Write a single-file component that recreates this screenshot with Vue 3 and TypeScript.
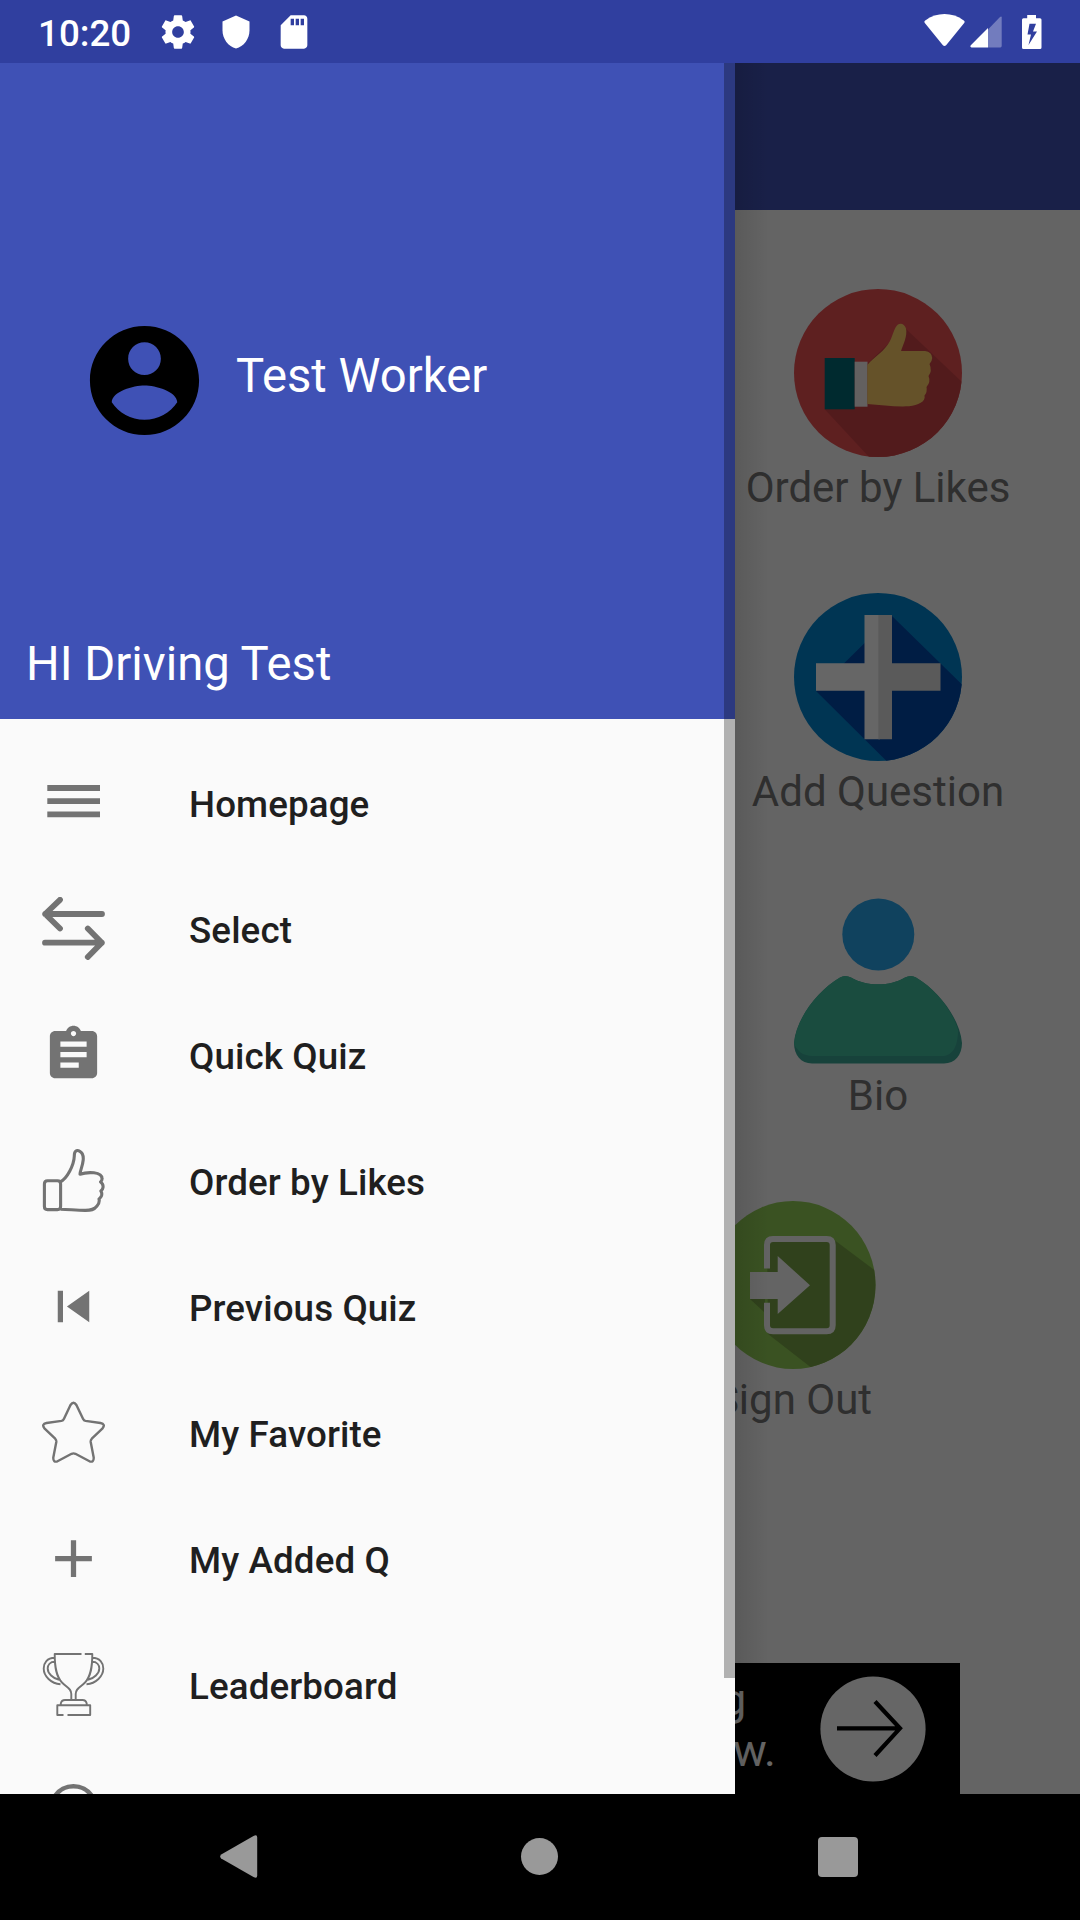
<script setup lang="ts">
interface Stroke {
  d: string
  width?: number
  fill?: boolean
}

interface MenuEntry {
  label: string
  box: number
  shapes: Stroke[]
}

const entries: MenuEntry[] = [
  {
    label: 'Homepage',
    box: 63,
    shapes: [{ d: 'M5.3 17H58M5.3 30.2H58M5.3 43.3H58', width: 5.8 }],
  },
  {
    label: 'Select',
    box: 63,
    shapes: [
      { d: 'M60 17H3.2M18 2.8L3.2 17L18 31.5M3 45.7H59.8M45.8 31.5L59.8 45.7L45.8 60', width: 5.8 },
    ],
  },
  {
    label: 'Quick Quiz',
    box: 24,
    shapes: [
      {
        d: 'M19 3h-4.18C14.4 1.84 13.3 1 12 1c-1.3 0-2.4.84-2.82 2H5c-1.1 0-2 .9-2 2v14c0 1.1.9 2 2 2h14c1.1 0 2-.9 2-2V5c0-1.1-.9-2-2-2zm-7 0c.55 0 1 .45 1 1s-.45 1-1 1-1-.45-1-1 .45-1 1-1zm2 14H7v-2h7v2zm3-4H7v-2h10v2zm0-4H7V7h10v2z',
        fill: true,
      },
    ],
  },
  {
    label: 'Order by Likes',
    box: 63,
    shapes: [
      {
        d: 'M5.5 31.8H15.5Q18.6 31.8 18.6 35V57.5Q18.6 60.6 15.5 60.6H5.5Q2.4 60.6 2.4 57.5V35Q2.4 31.8 5.5 31.8ZM18 33C25 30 32 16 32.3 7C32.2 1.5 35 .8 37.5 2.2C41 4 41.5 7.5 41.2 11C40.5 18 38.2 21 38 25.2C43 23.5 47 23.3 52 23.8C57 24.4 60 26.5 60 29.5Q60.2 31.5 58.6 33Q61.5 35 61 38.5Q60.8 40.5 58.9 42Q60.3 44 59.5 46.8Q58.8 48.8 57 50Q58 53.5 55 57C52 60.8 49 61.5 43 61.4C35 61.2 28 60.6 18.6 60.2',
        width: 3.1,
      },
    ],
  },
  {
    label: 'Previous Quiz',
    box: 24,
    shapes: [{ d: 'M6 6h2v12H6zM9.5 12l8.5 6V6z', fill: true }],
  },
  {
    label: 'My Favorite',
    box: 63,
    shapes: [
      {
        d: 'M28.5 4Q31.5 -.6 34.4 4L41 17.8Q41.8 19.6 43.5 19.9L58.5 22Q63.8 23 60.6 27.3L49.8 37.7Q48.5 39.2 48.7 41L51.7 56.5Q52 61.7 47.5 60.3L33.4 52.8Q31.5 51.9 29.6 52.8L15.5 60.3Q11 61.7 11.3 56.5L14.3 41Q14.5 39.2 13.2 37.7L2.4 27.3Q-.8 23 4.5 22L19.5 19.9Q21.2 19.6 22 17.8Z',
        width: 2.4,
      },
    ],
  },
  {
    label: 'My Added Q',
    box: 24,
    shapes: [{ d: 'M19 13h-6v6h-2v-6H5v-2h6V5h2v6h6z', fill: true }],
  },
  {
    label: 'Leaderboard',
    box: 63,
    shapes: [
      {
        d: 'M39.5 1H12.7C12.7 14 14 23 20 29.5C25 34.5 29.3 35.5 29.3 41V46.5M42.8 1H50.3C50.3 14 49 23 43 29.5C38 34.5 33.7 35.5 33.7 41V46.5M12.7 4.8C5 4.8 1.7 10 1.7 15.5C1.7 23 9 30.8 18.5 31.2M12.9 8.8C8 8.8 5.7 12 5.7 15.5C5.7 20.5 11 25.5 17 26.8M50.3 4.8C58 4.8 61.3 10 61.3 15.5C61.3 23 54 30.8 44.5 31.2M50.1 8.8C55 8.8 57.3 12 57.3 15.5C57.3 20.5 52 25.5 46 26.8M18.8 52V50.5Q19.5 47 23 47H40.5Q44 47 44.7 50.5V52M21.5 62H15.3V52.3H48.2V62H25.5',
        width: 1.9,
      },
    ],
  },
  {
    label: '',
    box: 63,
    shapes: [{ d: 'M31.5 7.3A22.3 22.3 0 1 1 31.4 7.3Z', width: 4.6 }],
  },
]
</script>

<template>
  <div class="screen">
    <header class="status">
      <span class="clock">10:20</span>
      <svg class="gear" viewBox="0 0 24 24">
        <path
          d="M19.43 12.98c.04-.32.07-.64.07-.98s-.03-.66-.07-.98l2.11-1.65c.19-.15.24-.42.12-.64l-2-3.46c-.12-.22-.39-.3-.61-.22l-2.49 1c-.52-.4-1.08-.73-1.69-.98l-.38-2.65C14.46 2.18 14.25 2 14 2h-4c-.25 0-.46.18-.49.42l-.38 2.65c-.61.25-1.17.59-1.69.98l-2.49-1c-.23-.09-.49 0-.61.22l-2 3.46c-.13.22-.07.49.12.64l2.11 1.65c-.04.32-.07.65-.07.98s.03.66.07.98l-2.11 1.65c-.19.15-.24.42-.12.64l2 3.46c.12.22.39.3.61.22l2.49-1c.52.4 1.08.73 1.69.98l.38 2.65c.03.24.24.42.49.42h4c.25 0 .46-.18.49-.42l.38-2.65c.61-.25 1.17-.59 1.69-.98l2.49 1c.23.09.49 0 .61-.22l2-3.46c.12-.22.07-.49-.12-.64l-2.11-1.65zM12 15.5c-1.93 0-3.5-1.57-3.5-3.5s1.57-3.5 3.5-3.5 3.5 1.57 3.5 3.5-1.57 3.5-3.5 3.5z"
        />
      </svg>
      <svg class="shield" viewBox="0 0 24 24">
        <path d="M12 1L3 5v6c0 5.55 3.84 10.74 9 12 5.16-1.26 9-6.45 9-12V5z" />
      </svg>
      <svg class="sd" viewBox="0 0 24 24">
        <path
          d="M18 2h-8L4.02 8 4 20c0 1.1.9 2 2 2h12c1.1 0 2-.9 2-2V4c0-1.1-.9-2-2-2zm-6 6h-2V4h2v4zm3 0h-2V4h2v4zm3 0h-2V4h2v4z"
        />
      </svg>
      <svg class="wifi" viewBox="0 0 41 33">
        <path d="M.8 9Q-.3 7.5 1.2 6.4C13 -2 28 -2 39.8 6.4Q41.3 7.5 40.2 9L22.3 31Q20.5 33 18.7 31Z" />
      </svg>
      <svg class="signal" viewBox="0 0 32 32">
        <path d="M18 13.4L30 .9Q31.7 -.2 31.7 1.5V30Q31.7 31.4 30.3 31.4H18Z" opacity=".32" />
        <path d="M18 12V31.4H1.5Q-.3 31 .8 29.3Z" />
      </svg>
      <svg class="battery" viewBox="0 0 20 34">
        <path
          fill-rule="evenodd"
          d="M5.2 0H14V3.2H18Q19.5 3.2 19.5 4.7V32.5Q19.5 34 18 34H1.5Q0 34 0 32.5V4.7Q0 3.2 1.5 3.2H5.2ZM7.5 8.8L5.5 19.5H9L6.5 30L15 16.5H11L14 8.8Z"
        />
      </svg>
    </header>

    <main class="stage">
      <div class="toolbar"></div>
      <section class="tiles">
        <article class="tile">
          <svg viewBox="0 0 168 168">
            <clipPath id="disc"><circle cx="84" cy="84" r="84" /></clipPath>
            <g clip-path="url(#disc)">
              <rect width="168" height="168" fill="#eb5052" />
              <path d="M111 39L168 93V168H75L30.7 120.3L73 75Z" fill="#ce4547" />
            </g>
            <rect x="30.7" y="69" width="30" height="51.3" fill="#006976" />
            <rect x="60.7" y="72.7" width="12.8" height="45" fill="#f8f0f0" />
            <path
              d="M73.3 76C80 68 91 62 96 52C99 46 100.5 38 104 35.5C107 33.8 110.5 35 112 39.5C113.5 47 109.5 55 107 62H131Q138 63 138.2 69Q138 72.5 135.5 75Q138.5 82 134.5 87Q137 93 132.5 98Q133.5 103 130.5 106.5C132 113 124 116 115 117.3C101 118 87 116 73.3 115Z"
              fill="#fdcd68"
            />
          </svg>
          <span>Order by Likes</span>
        </article>
        <article class="tile">
          <svg viewBox="0 0 168 168">
            <g clip-path="url(#disc)">
              <rect width="168" height="168" fill="#0085d0" />
              <path d="M98 23L168 91.5V168H92.5L22 98Z" fill="#0049aa" />
            </g>
            <path d="M70.5 22H86V146.3H70.5V97.8H22V70.3H70.5Z" fill="#fff" />
            <path d="M84.3 22H98V70.3H146.5V97.8H98V146.3H84.3Z" fill="#e1e1e1" />
          </svg>
          <span>Add Question</span>
        </article>
        <article class="tile">
          <svg viewBox="0 0 168 168">
            <circle cx="84.3" cy="37.5" r="36" fill="#2aa5ec" />
            <path
              d="M46 80.5Q51 77.5 57 80.5C66 85.5 74 87.3 84.3 87.3S102 85.5 111 80.5Q117 77.5 122 80.5C145 94 166 122 168 146C168 158 161 166.5 150 166.5H18C7 166.5 0 158 0 146C2 122 23 94 46 80.5Z"
              fill="#3aa594"
            />
            <path
              d="M46 80.5Q51 77.5 57 80.5C66 85.5 74 87.3 84.3 87.3S102 85.5 111 80.5Q117 77.5 122 80.5C142 92 159 115 164 133C164 152 157 159 148 159H22C12 159 6 158 0 147C2 122 23 94 46 80.5Z"
              fill="#43be9f"
            />
          </svg>
          <span>Bio</span>
        </article>
        <article class="tile wide">
          <svg viewBox="0 0 168 168">
            <clipPath id="discSmall"><ellipse cx="84" cy="84" rx="82.5" ry="84" /></clipPath>
            <g clip-path="url(#discSmall)">
              <rect width="168" height="168" fill="#91cd55" />
              <path d="M58 38H124L168 71V168H104L59 133Z" fill="#78a346" />
              <path d="M41 98H56V112Z" fill="#78a346" />
            </g>
            <path
              d="M58 67.5V44Q58 38 64 38H117.7Q123.7 38 123.7 44V124.3Q123.7 130.3 117.7 130.3H64Q58 130.3 58 124.3V101.7"
              fill="none"
              stroke="#f8f8f8"
              stroke-width="6"
            />
            <path d="M41 71H68.7V55L101 84.3L68.7 113V98H41Z" fill="#fbfbfb" />
          </svg>
          <span>Sign Out</span>
        </article>
      </section>
      <aside class="banner">
        <p class="copy"><span class="first">g</span><span>w.</span></p>
        <svg class="go" viewBox="0 0 106 106">
          <circle cx="53" cy="53" r="52.6" fill="#fff" />
          <path d="M17 52.3H79.5M55 25.5L80 52.3L55 79.5" fill="none" stroke="#000" stroke-width="4.2" />
        </svg>
      </aside>
      <div class="scrim"></div>
      <div class="edge"></div>

      <nav class="drawer">
        <div class="head">
          <div class="person">
            <svg class="avatar" viewBox="0 0 24 24">
              <path
                d="M12 2C6.48 2 2 6.48 2 12s4.48 10 10 10 10-4.48 10-10S17.52 2 12 2zm0 3c1.66 0 3 1.34 3 3s-1.34 3-3 3-3-1.34-3-3 1.34-3 3-3zm0 14.2c-2.5 0-4.71-1.28-6-3.22.03-1.99 4-3.08 6-3.08 1.99 0 5.97 1.09 6 3.08-1.29 1.94-3.5 3.22-6 3.22z"
              />
            </svg>
            <span class="name">Test Worker</span>
          </div>
          <span class="title">HI Driving Test</span>
        </div>
        <ul class="menu">
          <li v-for="(entry, i) in entries" :key="i">
            <svg class="icon" :viewBox="`0 0 ${entry.box} ${entry.box}`">
              <path
                v-for="(shape, j) in entry.shapes"
                :key="j"
                :d="shape.d"
                :fill="shape.fill ? '#737373' : 'none'"
                :stroke="shape.fill ? 'none' : '#737373'"
                :stroke-width="shape.width"
                :stroke-linecap="entry.label === 'Select' ? 'round' : 'butt'"
                stroke-linejoin="round"
              />
            </svg>
            <span v-if="entry.label">{{ entry.label }}</span>
          </li>
        </ul>
        <i class="scrollbar"></i>
      </nav>
    </main>

    <footer class="system">
      <svg class="back" viewBox="0 0 38 43">
        <path d="M33.5 1Q37.2 -1 37.2 2.5V40.5Q37.2 44 33.5 42L1.2 23.5Q-.8 21.5 1.2 19.5Z" />
      </svg>
      <i class="home"></i>
      <i class="recent"></i>
    </footer>
  </div>
</template>

<style>
body {
  margin: 0;
}
</style>

<style scoped>
.screen {
  width: 1080px;
  height: 1920px;
  display: flex;
  flex-direction: column;
  overflow: hidden;
  font-family: Roboto, sans-serif;
  background: #000;
}
svg {
  display: block;
  flex: none;
}
.status {
  height: 63px;
  flex: none;
  display: flex;
  align-items: center;
  background: #303f9f;
  color: #fff;
}
.status svg {
  fill: #fff;
}
.clock {
  width: 120px;
  margin-left: 38px;
  padding-top: 4px;
  font-size: 36.75px;
  font-weight: 500;
  line-height: 44px;
}
.gear {
  width: 40px;
  height: 40px;
}
.shield {
  width: 36px;
  height: 36px;
  margin-left: 20px;
}
.sd {
  width: 40px;
  height: 40px;
  margin-left: 20px;
}
.wifi {
  width: 41px;
  height: 33px;
  margin-left: auto;
  margin-top: -2px;
}
.signal {
  width: 32px;
  height: 32px;
  margin-left: 5px;
}
.battery {
  width: 20px;
  height: 34px;
  margin: 0 38px 0 20px;
}
.stage {
  position: relative;
  height: 1731px;
  flex: none;
  display: flex;
  flex-direction: column;
  overflow: hidden;
  background: #fafafa;
}
.toolbar {
  height: 147px;
  flex: none;
  background: #3f51b5;
}
.tiles {
  flex: 1;
  display: flex;
  flex-direction: column;
  align-items: flex-end;
  gap: 74px;
  padding-top: 79px;
}
.tile {
  width: 404px;
  display: flex;
  flex-direction: column;
  align-items: center;
  color: #757575;
  font-size: 42px;
  line-height: 62px;
}
.tile.wide {
  width: 574px;
}
.tile svg {
  width: 168px;
  height: 168px;
}
.banner {
  width: 840px;
  height: 131px;
  flex: none;
  align-self: center;
  display: flex;
  justify-content: flex-end;
  align-items: center;
  background: #000;
  color: #fff;
}
.copy {
  width: 100px;
  margin: 0;
  padding-bottom: 7px;
  display: flex;
  flex-direction: column;
  font-size: 45px;
  line-height: 51px;
}
.copy .first {
  margin-left: -12px;
}
.go {
  width: 106px;
  height: 106px;
  margin: 0 34px 0 -13px;
}
.scrim {
  position: absolute;
  inset: 0;
  background: rgba(0, 0, 0, 0.6);
}
.edge {
  position: absolute;
  top: 0;
  bottom: 0;
  left: 735px;
  width: 34px;
  background: linear-gradient(90deg, rgba(0, 0, 0, 0.1), rgba(0, 0, 0, 0));
}
.drawer {
  position: absolute;
  top: 0;
  bottom: 0;
  left: 0;
  width: 735px;
  display: flex;
  flex-direction: column;
  overflow: hidden;
  background: #fafafa;
}
.head {
  height: 656px;
  flex: none;
  box-sizing: border-box;
  display: flex;
  flex-direction: column;
  justify-content: space-between;
  padding: 252px 0 25px 26px;
  background: #3f51b5;
  color: #fff;
  font-size: 47.25px;
  line-height: 60px;
}
.person {
  display: flex;
  align-items: center;
  padding-left: 53px;
}
.avatar {
  width: 131px;
  height: 131px;
  fill: #000;
}
.name {
  margin: -10px 0 0 26px;
}
.menu {
  list-style: none;
  margin: 0;
  padding: 20px 0 0;
}
.menu li {
  height: 126px;
  display: flex;
  align-items: center;
  padding-left: 42px;
  color: #1f1f1f;
  font-size: 36.75px;
  font-weight: 500;
  line-height: 44px;
  letter-spacing: 0.1px;
}
.icon {
  width: 63px;
  height: 63px;
}
.menu span {
  margin: 5px 0 0 84px;
}
.scrollbar {
  position: absolute;
  top: 0;
  right: 0;
  width: 11px;
  height: 1615px;
  background: rgba(0, 0, 0, 0.29);
}
.system {
  height: 126px;
  flex: none;
  box-sizing: border-box;
  padding-bottom: 1px;
  display: flex;
  align-items: center;
  background: #000;
}
.back {
  width: 38px;
  height: 43px;
  margin-left: 220px;
  fill: #999;
}
.home {
  width: 37px;
  height: 37px;
  margin-left: 263px;
  border-radius: 50%;
  background: #999;
}
.recent {
  width: 40px;
  height: 40px;
  margin-left: 260px;
  border-radius: 4px;
  background: #999;
}
</style>
